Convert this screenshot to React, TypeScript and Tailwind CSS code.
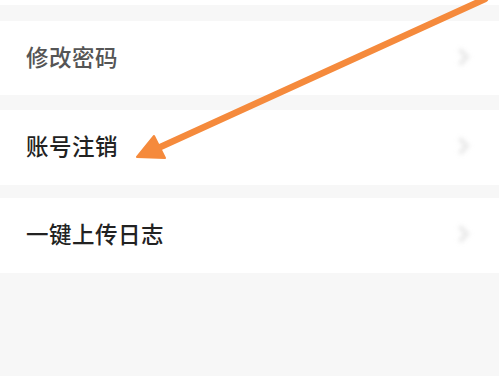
import React from "react";

const Chevron = () => (
  <svg width="14" height="18" viewBox="0 0 14 18" className="blur-[2px]">
    <path d="M4 3 L10 9 L4 15" fill="none" stroke="#ebebeb" strokeWidth="5" strokeLinecap="round" strokeLinejoin="round" />
  </svg>
);

const Row = ({ label, color, className }: { label: string; color: string; className: string }) => (
  <div className={`flex items-center justify-between bg-white pb-[3px] pl-[26px] pr-[28px] ${className}`}>
    <span
      className={`text-[22.5px] font-medium tracking-[0.5px] ${color}`}
      style={{ fontFamily: '"Noto Sans CJK SC", sans-serif' }}
    >
      {label}
    </span>
    <Chevron />
  </div>
);

export default function App() {
  return (
    <div className="relative h-[376px] w-[499px] overflow-hidden bg-[#f7f7f7]">
      <div className="h-[5px] bg-white" />
      <Row label="修改密码" color="text-[#555555]" className="mt-[16px] h-[74px]" />
      <Row label="账号注销" color="text-[#222222]" className="mt-[15px] h-[75px]" />
      <Row label="一键上传日志" color="text-[#222222]" className="mt-[13px] h-[75px]" />
      <svg className="absolute left-0 top-0" width="499" height="376" viewBox="0 0 499 376">
        <line x1="485" y1="-1" x2="156" y2="149" stroke="#f58a3c" strokeWidth="6.5" strokeLinecap="round" />
        <polygon points="137,157 154,136 165,158" fill="#f58a3c" stroke="#f58a3c" strokeWidth="2" strokeLinejoin="round" />
      </svg>
    </div>
  );
}
